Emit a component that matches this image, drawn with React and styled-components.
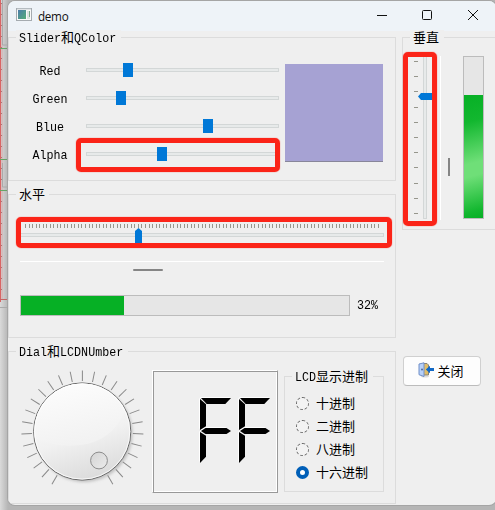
import React from "react";
import styled, { createGlobalStyle } from "styled-components";

const Global = createGlobalStyle`
  *{box-sizing:border-box}
  body{margin:0;overflow:hidden;background:#b5b5b5}
`;
const Desktop = styled.div`
  position:relative;width:495px;height:510px;padding:1px 0 0 8px;overflow:hidden;
  background:linear-gradient(90deg,#dadada,#b5b5b5 8px);
`;
const Backdrop = styled.svg`position:absolute;left:0;top:0;`;
const Window = styled.main`
  position:relative;width:488px;height:504px;border-radius:7px;overflow:hidden;
  background:#efefef;box-shadow:0 0 0 1px #a5a5a5;color:#000;
  font-family:"Liberation Mono","Noto Sans CJK SC",monospace;font-size:11.7px;
`;
const TitleBar = styled.header`
  height:30px;display:flex;align-items:center;padding:0 18px 2px 8px;background:#eef3f8;
`;
const Title = styled.h1`
  flex:1;margin:0 0 0 6px;padding-top:1px;font:400 11.7px/16px "Open Sans",sans-serif;letter-spacing:-.3px;color:#111;
`;
const Controls = styled.svg`display:block;`;
const Body = styled.div`display:flex;gap:6px;padding-top:6px;`;
const LeftColumn = styled.div`flex:none;width:388px;display:flex;flex-direction:column;gap:13px;`;
const RightColumn = styled.div`flex:none;width:100px;`;
const Group = styled.section`
  flex:none;border:1px solid #dcdcdc;height:${p => p.$h}px;
`;
const Legend = styled.h2`
  width:${p => p.$w}px;height:15px;margin:-8px 0 0 7px;padding-left:3px;
  background:#efefef;font-size:inherit;font-weight:400;line-height:13px;white-space:nowrap;
`;
const Latin = styled.span`display:inline-block;transform:scaleY(1.16);`;
const Cjk = styled.span`font-family:"Noto Sans CJK SC",sans-serif;font-size:13px;line-height:13px;`;

const ColorPanel = styled.div`display:flex;padding:11px 0 0 11px;`;
const Channels = styled.div`width:265px;`;
const Channel = styled.div`display:flex;align-items:center;height:28px;`;
const ChannelName = styled.label`width:60px;padding-top:3px;text-align:center;line-height:14px;`;
const Track = styled.div`
  width:193px;height:4px;margin-left:6px;border:1px solid #d3d7d7;background:#e7eaea;
`;
const Handle = styled.div`
  width:10px;height:14px;margin:-6px 0 0 ${p => p.$x - 1}px;background:#0078d7;
`;
const Swatch = styled.div`
  width:98px;height:98px;margin-top:8px;background:#a6a2d3;border-bottom:1px solid #88869a;
`;
const HorizontalPanel = styled.div`padding:22px 0 0 11px;display:flex;flex-direction:column;`;
const Divider = styled.div`width:364px;height:1px;margin-top:17px;background:#fff;`;
const Pill = styled.div`width:30px;height:2px;margin:7px 0 0 113px;background:#858585;border-radius:1px;`;
const ProgressRow = styled.div`display:flex;align-items:center;gap:7px;margin-top:24px;`;
const Progress = styled.div`width:330px;height:21px;border:1px solid #bcbcbc;background:#e6e6e6;`;
const Fill = styled.div`width:103px;height:19px;background:#06b025;`;

const DialPanel = styled.div`display:flex;padding-left:11px;`;
const DialArt = styled.svg`display:block;flex:none;margin-top:9px;`;
const LcdFrame = styled.div`
  display:flex;flex:none;justify-content:flex-end;gap:8px;
  width:126px;height:123px;margin:11px 0 0 8px;padding:27px 7px 0 0;
  border:1px solid;border-color:#fff #989898 #989898 #fff;
  box-shadow:inset 1px 1px #989898,inset -1px -1px #fff;
`;
const Digit = styled.div`position:relative;width:31px;height:66px;filter:drop-shadow(-1px -1px 0 #fff);`;
const Segment = styled.i`
  position:absolute;background:#000;left:${p => p.$s.x}px;top:${p => p.$s.y}px;
  width:${p => p.$s.w}px;height:${p => p.$s.h}px;clip-path:polygon(${p => p.$s.clip});
`;
const RadioGroup = styled(Group)`width:100px;margin:17px 0 0 6px;`;
const Radios = styled.div`padding:8px 0 0 11px;`;
const RadioRow = styled.label`display:flex;align-items:center;height:23px;gap:7px;`;
const RadioText = styled(Cjk)`padding-bottom:2px;`;
const RadioDot = styled.span`
  width:13px;height:13px;border-radius:50%;
  border:${p => (p.$on ? "4px solid #005fb8" : "1px dashed #666")};
  background:${p => (p.$on ? "#fff" : "#f3f3f3")};
`;
const VerticalPanel = styled.div`display:flex;padding:11px 0 0 11px;`;
const VLine = styled.div`width:1px;height:164px;margin-left:6px;background:#fff;`;
const VPill = styled.div`width:2px;height:18px;margin:102px 0 0 7px;background:#858585;`;
const VProgress = styled.div`
  width:21px;height:163px;margin-left:13px;padding-top:38px;border:1px solid #bcbcbc;background:#e6e6e6;
`;
const VFill = styled.div`
  height:123px;background:linear-gradient(165deg,#06b025 0%,#12b72f 22%,#6fdf78 55%,#6fdf78 65%,#12b72f 93%,#06b025);
`;
const CloseButton = styled.button`
  display:flex;align-items:center;justify-content:center;gap:3px;width:78px;height:30px;
  margin:126px 0 0 1px;padding:0 2px 2px 0;border:1px solid #d0d0d0;border-bottom-color:#bcbcbc;
  border-radius:4px;background:#fdfdfd;color:#000;
`;
const Highlight = styled.div`
  position:absolute;left:${p => p.$x}px;top:${p => p.$y}px;width:${p => p.$w}px;height:${p => p.$h}px;
  border:5px solid #fb2418;border-radius:5px;box-shadow:0 0 1px #fb2418;pointer-events:none;
`;

const SEGMENTS = {
  top: { x: 1, y: 0, w: 30, h: 6, clip: "0 0,100% 0,81% 100%,19% 100%" },
  upper: { x: 0, y: 1, w: 6, h: 31, clip: "0 0,100% 17%,100% 88%,0 100%" },
  middle: { x: 1, y: 30, w: 30, h: 6, clip: "0 50%,15% 0,85% 0,100% 50%,85% 100%,15% 100%" },
  lower: { x: 0, y: 34, w: 6, h: 31, clip: "0 0,100% 12%,100% 80%,0 100%" },
};
const DIGITS = { F: ["top", "upper", "middle", "lower"] };
const channels = [["Red", 37], ["Green", 30], ["Blue", 117], ["Alpha", 71]];
const bases = ["十进制", "二进制", "八进制", "十六进制"];
const range = n => Array.from({ length: n }, (_, i) => i);

function AppIcon() {
  return (
    <svg width="16" height="14" viewBox="0 0 16 14">
      <defs><linearGradient id="app" x2="1" y2="1"><stop stopColor="#4c7cac" /><stop offset="1" stopColor="#54ae78" /></linearGradient></defs>
      <rect x=".5" y=".5" width="15" height="12" fill="#fafafa" stroke="#a5abb0" />
      <path d="M1 1h14" stroke="#c5ccd2" /><rect x="2" y="2" width="8" height="9" fill="url(#app)" />
      <rect x="11" y="3" width="3" height="8" fill="#dce3e1" /><path d="M13.5 3v6" stroke="#79a88b" />
    </svg>
  );
}
function Dial() {
  return (
    <DialArt width="124" height="128" viewBox="21 368 124 128">
      <defs>
        <linearGradient id="face" x1=".35" y1="0" x2=".65" y2="1"><stop stopColor="#fff" /><stop offset=".55" stopColor="#f1f1f1" /><stop offset="1" stopColor="#dadada" /></linearGradient>
        <linearGradient id="gloss" x1=".3" y1="0" x2=".6" y2="1"><stop stopColor="#fff" /><stop offset="1" stopColor="#f1f1f1" /></linearGradient>
        <linearGradient id="knob" x2="1" y2="1"><stop stopColor="#d3d3d3" /><stop offset="1" stopColor="#ececec" /></linearGradient>
        <clipPath id="disc"><circle cx="83.2" cy="431.5" r="48" /></clipPath>
        <filter id="soft"><feGaussianBlur stdDeviation="1.5" /></filter>
      </defs>
      {range(27).map(i => (
        <path key={i} d="M83.4 370.5v10.5" transform={`rotate(${(i - 13) * 11.54} 83.4 431.5)`} stroke="#888" strokeWidth="1" />
      ))}
      <circle cx="85" cy="433.5" r="48.5" fill="#999" opacity=".55" filter="url(#soft)" />
      <circle cx="83.2" cy="431.5" r="48.6" fill="url(#face)" stroke="#686868" />
      <path d="M30 435Q58 450 88 444Q118 437 128 405V370H30Z" fill="url(#gloss)" clipPath="url(#disc)" />
      <circle cx="83.2" cy="431.5" r="47.6" fill="none" stroke="#fff" opacity=".8" />
      <circle cx="100" cy="460.5" r="8.4" fill="url(#knob)" stroke="#8c8c8c" />
    </DialArt>
  );
}
function DoorIcon() {
  return (
    <svg width="16" height="16" viewBox="0 0 16 16">
      <ellipse cx="7" cy="14.5" rx="4" ry="1" fill="#ddd" />
      <path d="M5.5 1.5H9L10.5 3V13H5.5Z" fill="#e0bd68" stroke="#85837b" />
      <path d="M1 2L6 .8V14.5L1 12.7Z" fill="#b7d1fa" stroke="#718fc7" />
      <circle cx="4" cy="7.5" r="1" fill="#4f6795" />
      <path d="M7.8 7.5L12 3.7V6H16V9H12V11.3Z" fill="#1269c6" />
    </svg>
  );
}

export default function App() {
  return (
    <>
      <Global />
      <Desktop>
        <Backdrop width="8" height="510">
          <path d="M.5 0V302" stroke="#d96565" /><path d="M2 3V300" stroke="#d8a8a8" />
          <path d="M1.5 3V300" stroke="#a77" strokeDasharray="1 10" />
          <path d="M0 48.5H8M0 159.5H8M0 190.5H8" stroke="#66a566" />
          <path d="M2.5 0V45H8M2.5 163V187H8M0 307.5H8" fill="none" stroke="#aaa" />
          <path d="M0 299.5H8" stroke="#c56464" />
        </Backdrop>
        <Window>
          <TitleBar>
            <AppIcon /><Title>demo</Title>
            <Controls width="103" height="12" fill="none" stroke="#111">
              <path d="M2 6.5H12" /><rect x="47.5" y="1.5" width="9" height="9" rx="1" /><path d="M93 1L103 11M103 1L93 11" />
            </Controls>
          </TitleBar>
          <Body>
            <LeftColumn>
              <Group $h={144}>
                <Legend $w={105}><Latin>Slider</Latin><Cjk>和</Cjk><Latin>QColor</Latin></Legend>
                <ColorPanel>
                  <Channels>
                    {channels.map(([name, x]) => (
                      <Channel key={name}><ChannelName><Latin>{name}</Latin></ChannelName><Track><Handle $x={x} /></Track></Channel>
                    ))}
                  </Channels>
                  <Swatch />
                </ColorPanel>
              </Group>
              <Group $h={144}>
                <Legend $w={33}><Cjk>水平</Cjk></Legend>
                <HorizontalPanel>
                  <svg width="364" height="20" viewBox="20 224 364 20" shapeRendering="crispEdges">
                    {range(101).map(i => <rect key={i} x={Math.round(25 + i * 3.53)} y="224" width="1" height="4" fill="#96968c" />)}
                    <rect x="20.5" y="233.5" width="363" height="3" fill="#e7eaea" stroke="#d3d7d7" />
                    <path d="M135 243V231L138.5 228L142 231V243Z" fill="#0078d7" shapeRendering="auto" />
                  </svg>
                  <Divider /><Pill />
                  <ProgressRow><Progress><Fill /></Progress><Latin>32%</Latin></ProgressRow>
                </HorizontalPanel>
              </Group>
              <Group $h={153}>
                <Legend $w={112}><Latin>Dial</Latin><Cjk>和</Cjk><Latin>LCDNUmber</Latin></Legend>
                <DialPanel>
                  <Dial />
                  <LcdFrame role="img" aria-label="FF">
                    {["F", "F"].map((d, i) => (
                      <Digit key={i}>{DIGITS[d].map(s => <Segment key={s} $s={SEGMENTS[s]} />)}</Digit>
                    ))}
                  </LcdFrame>
                  <RadioGroup $h={116}>
                    <Legend $w={81}><Latin>LCD</Latin><Cjk>显示进制</Cjk></Legend>
                    <Radios>
                      {bases.map((b, i) => <RadioRow key={b}><RadioDot $on={i === 3} /><RadioText>{b}</RadioText></RadioRow>)}
                    </Radios>
                  </RadioGroup>
                </DialPanel>
              </Group>
            </LeftColumn>
            <RightColumn>
              <Group $h={193}>
                <Legend $w={34}><Cjk>垂直</Cjk></Legend>
                <VerticalPanel>
                  <svg width="20" height="164" viewBox="414 56 20 164">
                    {range(11).map(i => <rect key={i} x="414" y={Math.round(61 + i * 15.2)} width="4" height="1" fill="#96968c" />)}
                    <rect x="423.5" y="56.5" width="3" height="162" fill="#e7eaea" stroke="#d3d7d7" />
                    <path d="M433 93H421L418 96.5L421 100H433Z" fill="#0078d7" />
                  </svg>
                  <VLine /><VPill /><VProgress><VFill /></VProgress>
                </VerticalPanel>
              </Group>
              <CloseButton><DoorIcon /><Cjk>关闭</Cjk></CloseButton>
            </RightColumn>
          </Body>
        </Window>
        <Highlight $x={76} $y={138} $w={204} $h={34} />
        <Highlight $x={16} $y={217} $w={376} $h={31} />
        <Highlight $x={403} $y={52} $w={34} $h={174} />
      </Desktop>
    </>
  );
}
